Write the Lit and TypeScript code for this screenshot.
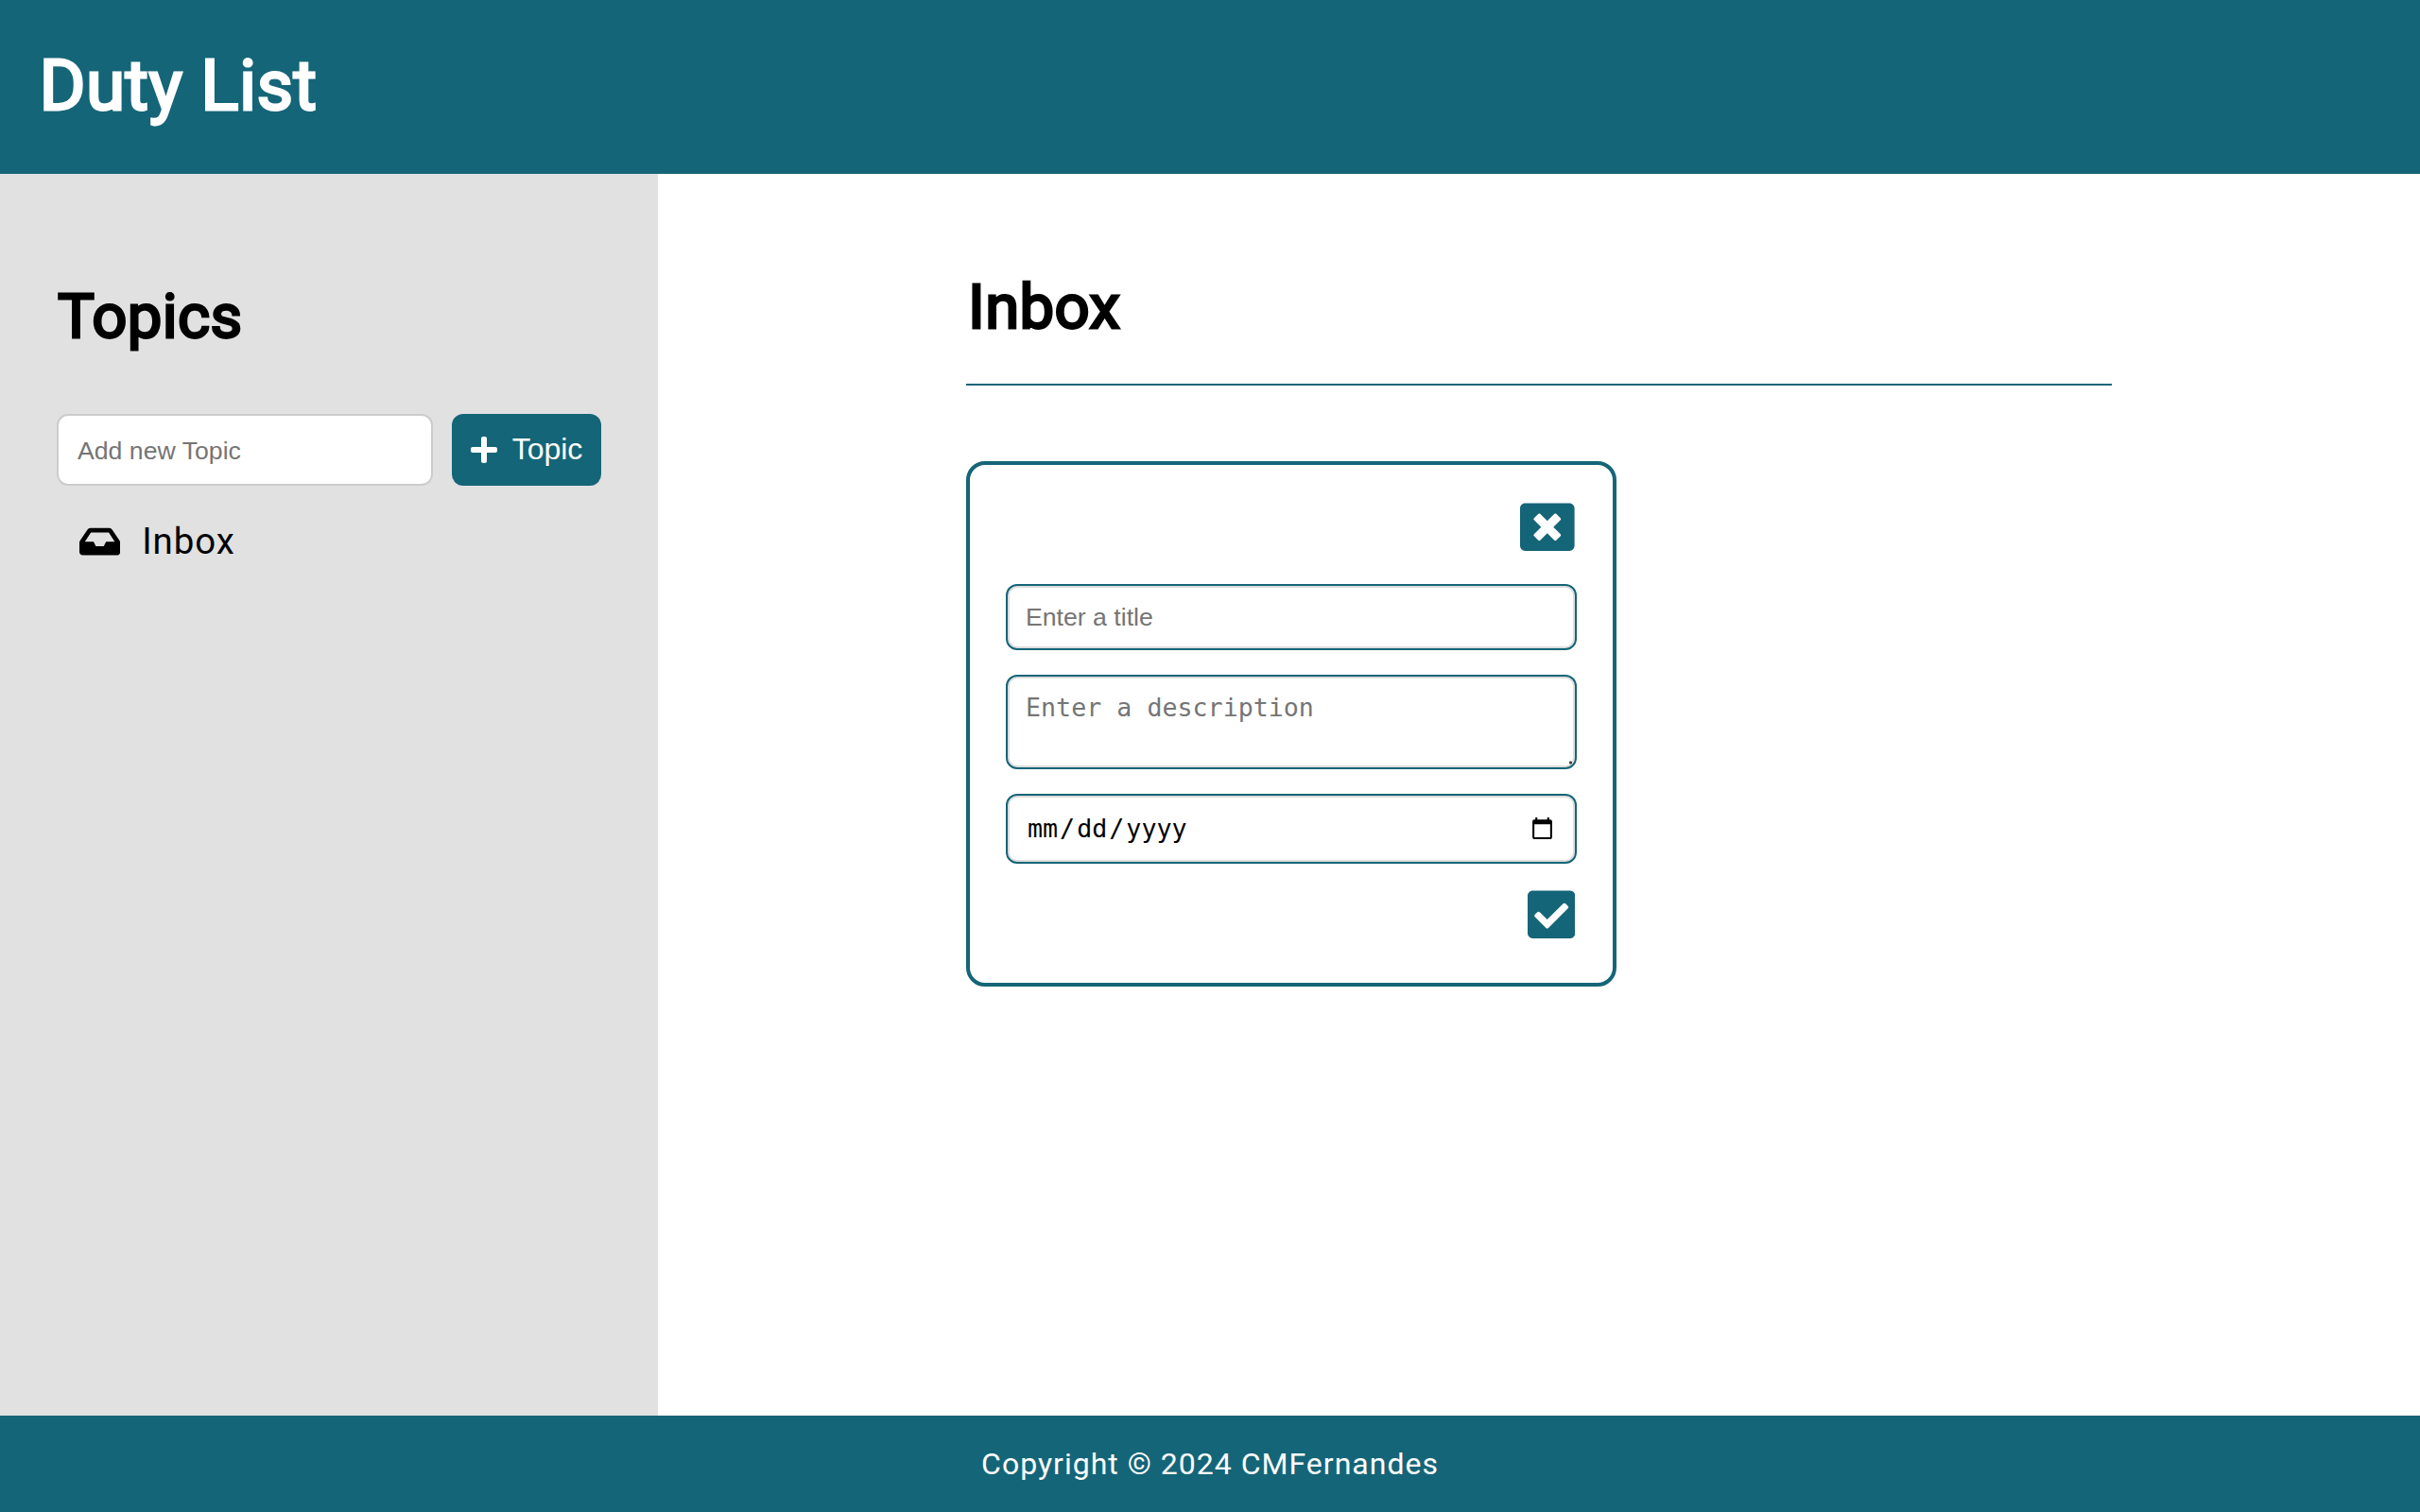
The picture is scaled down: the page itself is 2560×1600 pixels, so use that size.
import { LitElement, html, css, svg } from "lit";
import { customElement } from "lit/decorators.js";

const icon = (name: string, width: number, path: string) => html`
  <svg class="icon ${name}" viewBox="0 0 ${width} 512" aria-hidden="true">${svg`<path d=${path} />`}</svg>
`;

const PLUS =
  "M416 208H272V64c0-17.67-14.33-32-32-32h-32c-17.67 0-32 14.33-32 32v144H32c-17.67 0-32 14.33-32 32v32c0 17.67 14.33 32 32 32h144v144c0 17.67 14.33 32 32 32h32c17.67 0 32-14.33 32-32V304h144c17.67 0 32-14.33 32-32v-32c0-17.67-14.33-32-32-32z";
const INBOX =
  "M567.938 243.908L462.25 85.374A48.003 48.003 0 0 0 422.311 64H153.689a48 48 0 0 0-39.938 21.374L8.062 243.908A47.994 47.994 0 0 0 0 270.533V400c0 26.51 21.49 48 48 48h480c26.51 0 48-21.49 48-48V270.533a47.994 47.994 0 0 0-8.062-26.625zM162.252 128h251.497l85.333 128H376l-32 64H232l-32-64H76.918l85.334-128z";
const CLOSE =
  "M464 32H48C21.5 32 0 53.5 0 80v352c0 26.5 21.5 48 48 48h416c26.5 0 48-21.5 48-48V80c0-26.5-21.5-48-48-48zm-83.6 290.5c4.8 4.8 4.8 12.6 0 17.4l-40.5 40.5c-4.8 4.8-12.6 4.8-17.4 0L256 313.3l-66.5 67.1c-4.8 4.8-12.6 4.8-17.4 0l-40.5-40.5c-4.8-4.8-4.8-12.6 0-17.4l67.1-66.5-67.1-66.5c-4.8-4.8-4.8-12.6 0-17.4l40.5-40.5c4.8-4.8 12.6-4.8 17.4 0l66.5 67.1 66.5-67.1c4.8-4.8 12.6-4.8 17.4 0l40.5 40.5c4.8 4.8 4.8 12.6 0 17.4L313.3 256l67.1 66.5z";
const CHECK =
  "M400 480H48c-26.51 0-48-21.49-48-48V80c0-26.51 21.49-48 48-48h352c26.51 0 48 21.49 48 48v352c0 26.51-21.49 48-48 48zm-204.686-98.059l184-184c6.248-6.248 6.248-16.379 0-22.627l-22.627-22.627c-6.248-6.248-16.379-6.249-22.628 0L184 302.745l-70.059-70.059c-6.248-6.248-16.379-6.248-22.628 0l-22.627 22.627c-6.248 6.248-6.248 16.379 0 22.627l104 104c6.249 6.249 16.379 6.249 22.628.001z";

@customElement("app-root")
export class AppRoot extends LitElement {
  static styles = css`
    :host {
      --teal: #156578;
      display: grid;
      grid-template: 184px 1fr 102px / 696px 1fr;
      height: 100vh;
      font-family: Roboto, sans-serif;
      color: #000;
      background: #fff;
    }
    * {
      box-sizing: border-box;
      margin: 0;
    }
    .icon {
      display: block;
      fill: currentColor;
      height: 1em;
      flex: none;
    }
    .header,
    .footer {
      grid-column: 1 / -1;
      background: var(--teal);
      color: #fff;
      display: flex;
      align-items: center;
    }
    .header {
      padding: 0 42px 3px 41.5px;
    }
    .brand,
    .heading {
      font-weight: 400;
      line-height: 90px;
      letter-spacing: 0.4px;
      -webkit-text-stroke: 2.8px currentColor;
    }
    .brand {
      font-size: 74.8px;
    }
    .heading {
      font-size: 65.2px;
      line-height: 91px;
      text-indent: 1px;
    }
    .main .heading {
      text-indent: 2px;
    }
    .footer {
      justify-content: center;
      font-size: 32px;
      letter-spacing: 1px;
    }
    .sidebar {
      background: #e1e1e1;
      padding: 106px 60px 0;
    }
    .new-topic {
      display: flex;
      gap: 20px;
      margin-top: 57px;
    }
    .topic-input {
      width: 398px;
      height: 76px;
      padding: 2px 20px 0;
      border: 2px solid #ccc;
      border-radius: 12px;
      background: #fff;
      font: 26.667px "Liberation Sans", sans-serif;
    }
    .topic-button {
      display: flex;
      align-items: center;
      justify-content: center;
      gap: 16px;
      width: 158px;
      height: 76px;
      padding: 0;
      border: 0;
      border-radius: 12px;
      background: var(--teal);
      color: #fff;
      font: 32px "Liberation Sans", sans-serif;
    }
    .topic-button span {
      padding-bottom: 2px;
    }
    .topics {
      list-style: none;
      padding: 36px 24px 0;
    }
    .topic {
      display: flex;
      align-items: center;
      gap: 23px;
      font-size: 38.4px;
      line-height: 46px;
      letter-spacing: 0.96px;
    }
    .main {
      padding: 96px 326px 0;
    }
    .title-row {
      border-bottom: 2px solid var(--teal);
      padding-bottom: 35px;
    }
    .card {
      display: flex;
      flex-direction: column;
      width: 688px;
      height: 556px;
      margin-top: 80px;
      padding: 37.4px 38px 0;
      border: 4px solid var(--teal);
      border-radius: 20px;
    }
    .icon-button {
      align-self: flex-end;
      display: block;
      padding: 0;
      margin-right: 2px;
      border: 0;
      background: none;
      color: var(--teal);
      font-size: 57.6px;
    }
    .icon-button.save {
      margin-top: 25.5px;
    }
    .field {
      display: block;
      zoom: 2;
      width: 100%;
      padding: 0 8.5px 0 9.5px;
      border: 1px solid var(--teal);
      border-radius: 6px;
      background: #fff;
      box-shadow: inset 0 0 0 1px #ddd;
      font-size: 13.3333px;
    }
    .field.title {
      height: 35px;
      margin-top: 15.5px;
      padding-top: 1px;
      font-family: "Liberation Sans", sans-serif;
    }
    .field.description {
      height: 50px;
      margin-top: 13px;
      padding-top: 8.5px;
      font-family: "DejaVu Sans Mono", monospace;
    }
    .field.description::-webkit-resizer {
      background: radial-gradient(circle 1px at calc(100% - 2.25px) calc(100% - 2.5px), #444 60%, transparent);
    }
    .field.date {
      height: 37px;
      margin-top: 13px;
      font-family: monospace;
    }
  `;

  render() {
    return html`
      <header class="header"><h1 class="brand">Duty List</h1></header>
      <aside class="sidebar">
        <h2 class="heading">Topics</h2>
        <div class="new-topic">
          <input class="topic-input" placeholder="Add new Topic" />
          <button class="topic-button">${icon("plus", 448, PLUS)}<span>Topic</span></button>
        </div>
        <ul class="topics">
          <li class="topic">${icon("inbox", 576, INBOX)}<span>Inbox</span></li>
        </ul>
      </aside>
      <main class="main">
        <div class="title-row"><h2 class="heading">Inbox</h2></div>
        <form class="card">
          <button type="button" class="icon-button close">${icon("x", 512, CLOSE)}</button>
          <input class="field title" placeholder="Enter a title" />
          <textarea class="field description" placeholder="Enter a description"></textarea>
          <input class="field date" type="date" />
          <button type="button" class="icon-button save">${icon("check", 448, CHECK)}</button>
        </form>
      </main>
      <footer class="footer"><p>Copyright © 2024 CMFernandes</p></footer>
    `;
  }
}
